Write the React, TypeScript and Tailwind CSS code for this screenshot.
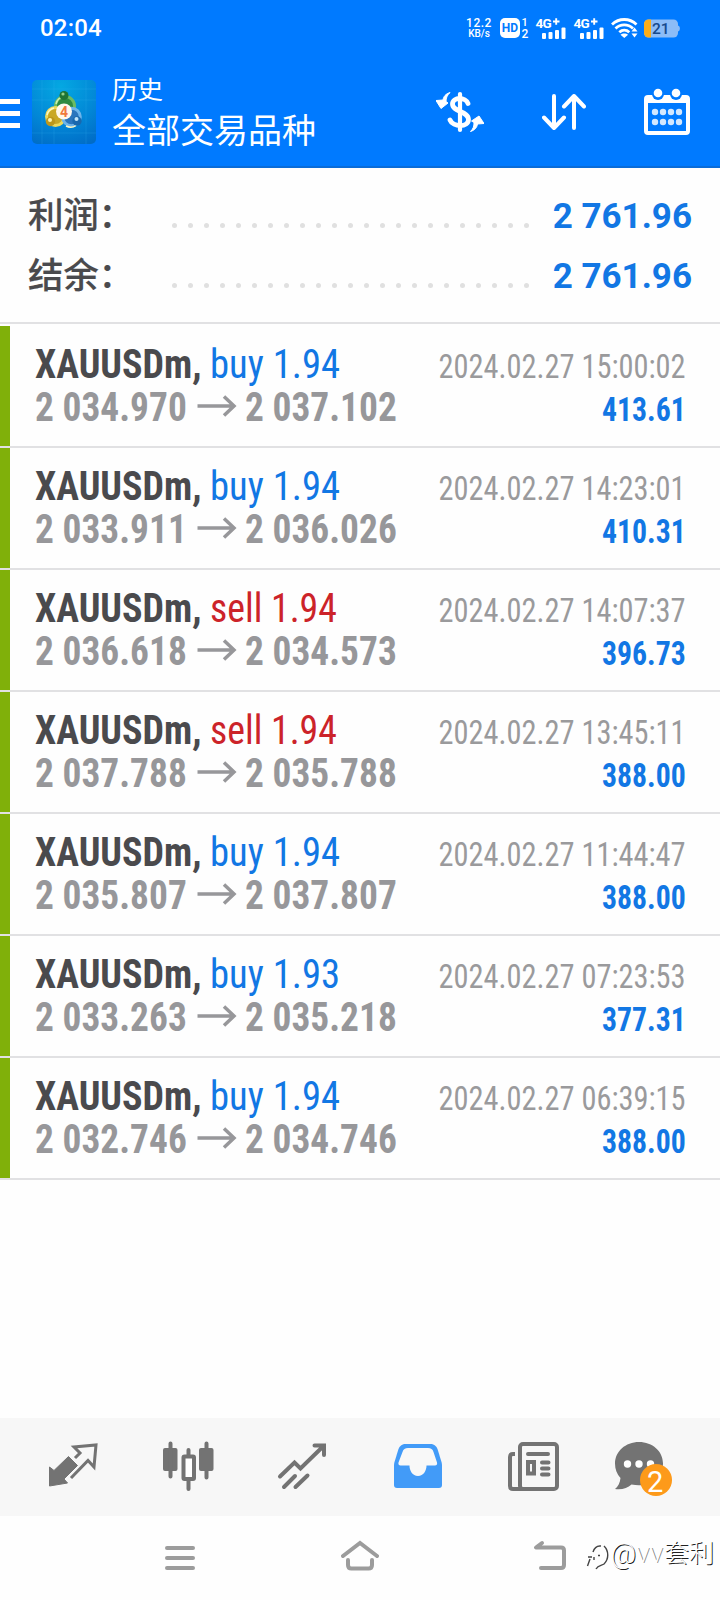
import React from "react";

interface Deal {
    type: "buy" | "sell";
    volume: string;
    open: string;
    close: string;
    time: string;
    profit: string;
}

const deals: Deal[] = [
    { type: "buy", volume: "1.94", open: "2 034.970", close: "2 037.102", time: "2024.02.27 15:00:02", profit: "413.61" },
    { type: "buy", volume: "1.94", open: "2 033.911", close: "2 036.026", time: "2024.02.27 14:23:01", profit: "410.31" },
    { type: "sell", volume: "1.94", open: "2 036.618", close: "2 034.573", time: "2024.02.27 14:07:37", profit: "396.73" },
    { type: "sell", volume: "1.94", open: "2 037.788", close: "2 035.788", time: "2024.02.27 13:45:11", profit: "388.00" },
    { type: "buy", volume: "1.94", open: "2 035.807", close: "2 037.807", time: "2024.02.27 11:44:47", profit: "388.00" },
    { type: "buy", volume: "1.93", open: "2 033.263", close: "2 035.218", time: "2024.02.27 07:23:53", profit: "377.31" },
    { type: "buy", volume: "1.94", open: "2 032.746", close: "2 034.746", time: "2024.02.27 06:39:15", profit: "388.00" },
];

const Signal: React.FC = () => (
    <svg className="overflow-visible" width="30" height="22" viewBox="0 0 30 22" fill="#fff">
        <text x="-0.5" y="10.500" fontSize="13.500" fontWeight="700" letterSpacing="-0.8">4G</text>
        <path d="M17 4.500h6.500M20.200 1.200v6.600" stroke="#fff" strokeWidth="1.900" />
        <rect x="6" y="16" width="4" height="6" rx="1" />
        <rect x="12.500" y="15" width="4" height="7" rx="1" />
        <rect x="19" y="13" width="4" height="9" rx="1" />
        <rect x="25.500" y="10.500" width="4" height="11.500" rx="1" />
    </svg>
);

const StatusBar: React.FC = () => (
    <div className="flex h-14 items-center pl-10 pr-[39px] text-white">
        <span className="text-2xl font-medium tracking-[0.2px]">02:04</span>
        <div className="ml-auto flex items-center">
            <div className="flex w-[26px] flex-col items-center font-medium leading-none">
                <span className="text-[12px] leading-[12px] tracking-[0.5px]">12.2</span>
                <span className="text-[10px] leading-[10px]">KB/s</span>
            </div>
            <svg className="ml-2 overflow-visible" width="29" height="22" viewBox="0 0 29 22" fill="#fff">
                <rect x="0" y="1" width="20" height="20" rx="5" />
                <text x="1.800" y="15.300" fontSize="12" fontWeight="700" fill="#007aff">HD</text>
                <text x="21.500" y="9" fontSize="11" fontWeight="500">1</text>
                <text x="21.500" y="21" fontSize="12" fontWeight="500">2</text>
            </svg>
            <div className="ml-[7px]"><Signal /></div>
            <div className="ml-2"><Signal /></div>
            <svg className="ml-[7px]" width="27" height="22" viewBox="0 0 27 22" fill="none" stroke="#fff" strokeWidth="2.8">
                <path d="M1 7.500C8 .8 18.500 .8 25.500 7.500" />
                <path d="M4.500 11.500c5-4.800 12.500-4.800 17.500 0" />
                <path d="M8.300 15.300c3-2.800 7-2.800 10 0" />
                <path d="M13.300 21l-3.800-3.300c2-1.700 5.600-1.700 7.600 0z" fill="#fff" stroke="none" />
                <path d="M23.500 10.500l3 4h-6zM23.500 20.500l3-4h-6z" fill="#fff" stroke="none" />
            </svg>
            <svg className="ml-[6px]" width="37" height="20" viewBox="0 0 37 20">
                <rect x="0" y="1.500" width="34" height="18" rx="4.500" fill="#8cbcf7" />
                <path d="M34 7.500c2.500.5 2.500 5.500 0 6z" fill="#8cbcf7" />
                <path d="M4.500 1.500H7v18H4.500A4.500 4.500 0 0 1 0 15V6a4.500 4.500 0 0 1 4.500-4.500z" fill="#fbad18" />
                <text x="8" y="16" fontSize="15.500" fontWeight="500" fill="#174a8e">21</text>
            </svg>
        </div>
    </div>
);

const AppLogo: React.FC = () => (
    <svg className="ml-3" width="64" height="64" viewBox="0 0 64 64">
        <defs>
            <radialGradient id="logoBg" cx="0.45" cy="0.1" r="1">
                <stop offset="0" stopColor="#04a8e2" />
                <stop offset="0.6" stopColor="#0286d6" />
                <stop offset="1" stopColor="#006cc6" />
            </radialGradient>
        </defs>
        <rect width="64" height="64" rx="5" fill="url(#logoBg)" />
        <path d="M10 0v64M22 0v64M54 0v64M0 9h64M0 20h64M0 53h64" stroke="#3fb4ee" strokeOpacity="0.2" />
        <circle cx="33" cy="26" r="9.500" fill="#2f8a41" stroke="#6cbc62" strokeWidth="3" />
        <circle cx="23.500" cy="36.500" r="9" fill="#c9a825" stroke="#ecd95c" strokeWidth="3" />
        <circle cx="39.500" cy="37" r="8.800" fill="#2a75bd" stroke="#6db4ea" strokeWidth="3" />
        <path d="M24 24c1-4 4-7 8-7" fill="none" stroke="#c9efae" strokeWidth="1.500" />
        <path d="M15 35c1-4 3-6 7-7M34 46c3 1.500 7 1.500 10-.5" fill="none" stroke="#fdf7c4" strokeWidth="1.500" />
        <circle cx="32" cy="15.500" r="4.500" fill="#1f7433" />
        <circle cx="31" cy="14" r="1.600" fill="#93d089" />
        <circle cx="18.500" cy="41.500" r="4.700" fill="#bd971b" />
        <circle cx="18" cy="40" r="2" fill="#fff6ae" />
        <circle cx="45" cy="41" r="4.700" fill="#1968ae" />
        <circle cx="44.500" cy="39" r="2" fill="#bfe4fb" />
        <circle cx="32" cy="31.500" r="8" fill="#fff8ec" />
        <text x="28" y="36.500" fontSize="14" fontWeight="700" fill="#ef7a3c">4</text>
    </svg>
);

const Header: React.FC = () => (
    <div className="flex h-28 items-center border-b-2 border-[#0a6cd8] pr-[30px] pt-[2px]">
        <div className="flex w-5 flex-col gap-[7px] pt-[2px]">
            <div className="h-[5px] bg-white" />
            <div className="h-[5px] bg-white" />
            <div className="h-[5px] bg-white" />
        </div>
        <AppLogo />
        <div className="ml-4 flex flex-col pt-[2px] text-white">
            <span className="text-[25.5px] leading-[36px]">历史</span>
            <span className="text-[34px] leading-[46px]">全部交易品种</span>
        </div>
        <div className="ml-auto flex items-center gap-[58px]">
            <svg width="48" height="42" viewBox="0 0 48 42" fill="none" stroke="#fff">
                <path d="M24 3v36" strokeWidth="4.200" strokeLinecap="round" />
                <path d="M32 12.500C30 6 16.500 5.500 16.500 13c0 8 16 7 16 15.500 0 8-15.500 8-18.500.5" strokeWidth="4.800" strokeLinecap="round" />
                <path d="M14 1.500C9.500 3 7.500 5.500 7 9L0 9.500 5 17.500l7-5.500-2-1.500C10 7 11 4.500 14 1.500z" fill="#fff" strokeWidth="1" strokeLinejoin="round" />
                <path d="M34.500 40.500c4.500-1.500 6.500-4 7-7.500l6.500-.5-5-7.500-7.500 5 2.500 1.500c0 3.500-.5 6-3.500 9z" fill="#fff" strokeWidth="1" strokeLinejoin="round" />
            </svg>
            <svg width="44" height="38" viewBox="0 0 44 38" fill="none" stroke="#fff" strokeWidth="4" strokeLinecap="round" strokeLinejoin="round">
                <path d="M12 3v32M2 24.500L12 35l10-10.500" />
                <path d="M32 35V3M22 13.500L32 3l10 10.500" />
            </svg>
            <svg width="46" height="48" viewBox="0 0 46 48">
                <rect x="2" y="9" width="42" height="36" rx="2" fill="none" stroke="#fff" strokeWidth="4" />
                <path d="M2 8h42v7H2z" fill="#fff" />
                <circle cx="14" cy="6" r="6" fill="#007aff" />
                <circle cx="32" cy="6" r="6" fill="#007aff" />
                <circle cx="14" cy="5" r="4.300" fill="#fff" />
                <circle cx="32" cy="5" r="4.300" fill="#fff" />
                <g fill="#d3e8ff">
                    {[11, 19, 27, 35].map((x) => (
                        <React.Fragment key={x}>
                            <circle cx={x} cy="24" r="3.200" />
                            <circle cx={x} cy="34" r="3.200" />
                        </React.Fragment>
                    ))}
                </g>
            </svg>
        </div>
    </div>
);

const SummaryRow: React.FC<{ label: string; value: string }> = ({ label, value }) => (
    <div className="flex h-[60px] items-center pl-7 pr-7">
        <span className="w-36 pb-[2px] text-[35.5px] font-medium leading-[58px] tracking-[-0.3px] text-[#4a4a4d] [-webkit-text-stroke:0.2px_#4a4a4d]">
            {label}
        </span>
        <div className="flex gap-[11px] pt-[17px]">
            {Array.from({ length: 23 }, (_, i) => (
                <div key={i} className="h-[5px] w-[5px] rounded-full bg-[#e0e0e0]" />
            ))}
        </div>
        <span className="ml-auto text-[35px] font-bold leading-[60px] text-[#1277e4]">{value}</span>
    </div>
);

const DealRow: React.FC<{ deal: Deal }> = ({ deal }) => (
    <div className="flex h-[122px] whitespace-nowrap border-b-2 border-[#e1e1e3] font-['Roboto_Condensed',Roboto,sans-serif]">
        <div className="w-[10px] bg-[#80b00a]" />
        <div className="flex flex-1 justify-between pl-[25px] pr-[34px] pt-[17px]">
            <div className="w-[370px] text-[40px] leading-[43px]">
                <div className="flex">
                    <span className="w-[175px] origin-left scale-x-[0.95] font-bold text-[#4a4a4d]">XAUUSDm,</span>
                    <span className={deal.type === "buy" ? "origin-left scale-x-[0.965] text-[#1277e4]" : "origin-left scale-x-[0.945] text-[#cc2329]"}>
                        {deal.type} {deal.volume}
                    </span>
                </div>
                <div className="flex items-center font-bold text-[#97979a]">
                    <span className="w-[161px] shrink-0 origin-left scale-x-[0.935]">{deal.open}</span>
                    <svg className="mb-[4px] mr-[7px] shrink-0" width="42" height="22" viewBox="0 0 42 22" fill="none" stroke="#97979a" strokeWidth="3.500">
                        <path d="M1.500 11h36.500M28 1.500L38 11 28 20.500" />
                    </svg>
                    <span className="shrink-0 origin-left scale-x-[0.935]">{deal.close}</span>
                </div>
            </div>
            <div className="flex w-[260px] flex-col items-end pt-[2px] text-[34px] leading-[43px]">
                <span className="origin-right scale-x-[0.893] text-[#9a9a9c]">{deal.time}</span>
                <span className="origin-right scale-x-[0.875] font-bold text-[#1277e4]">{deal.profit}</span>
            </div>
        </div>
    </div>
);

const TabBar: React.FC = () => (
    <div className="grid h-[98px] grid-cols-6 place-items-center bg-[#f7f7f7] px-4 pb-[2px]">
        <svg width="50" height="50" viewBox="0 0 50 50">
            <path d="M20.500 15.500l9 9-13.500 13.500 3.500 4L1.500 45V26l4.500 3.500z" fill="#737373" stroke="#737373" strokeLinejoin="round" />
            <path d="M27 17l5-5-6-6L48 4 46 26l-6-6.500L23 37" fill="none" stroke="#737373" strokeWidth="3" />
        </svg>
        <svg width="52" height="50" viewBox="0 0 52 50" fill="#737373">
            <rect x="1" y="7" width="14.500" height="23" rx="2" />
            <path d="M8.500 2.500v33M44.500 2.500v34M26.500 9v8M26.500 38v10" stroke="#737373" strokeWidth="4" strokeLinecap="round" />
            <rect x="37" y="7" width="14.500" height="23" rx="2" />
            <rect x="21.500" y="15.500" width="10.500" height="22.500" rx="1" fill="#fff" stroke="#737373" strokeWidth="4" />
        </svg>
        <svg className="mr-[2px]" width="50" height="50" viewBox="0 0 50 50" fill="none" stroke="#737373" strokeWidth="4" strokeLinecap="round">
            <path d="M3 35.500L17.500 21.500l6 6L46 5.500M37.500 4.500H47V14" />
            <path d="M7 46l11-11M18.500 46l12-11.500" />
        </svg>
        <svg className="ml-[2px]" width="48" height="46" viewBox="0 0 48 46">
            <path d="M12 1h24c4 0 6 1.500 7.500 5l4 13c.5 2 .5 3 .5 4v19c0 2-1 3-3 3H3c-2 0-3-1-3-3V23c0-1 0-2 .5-4l4-13C6 2.500 8 1 12 1z" fill="#429bf8" />
            <path d="M14 5h20c3 0 4.500 1 5.500 4l3.500 10.500c.5 2-.5 3-2 3H32.500c0 5-3 10.500-8.500 10.500s-8.500-5.500-8.500-10.500H6.500c-1.500 0-2.500-1-2-3L8.500 9c1-3 2.500-4 5.500-4z" fill="#f8f8f8" />
        </svg>
        <svg className="ml-[2px]" width="52" height="50" viewBox="0 0 52 50" fill="none" stroke="#737373" strokeWidth="4">
            <rect x="13" y="3" width="37" height="45" rx="3" />
            <path d="M8 13H6c-2 0-3 1-3 3v29c0 2 1 3 3 3h12" />
            <rect x="21" y="21" width="6" height="11.500" />
            <path d="M21 13h20M35 21.500h6.500M35 27.500h6.500M35 33.500h6.500" strokeLinecap="round" />
        </svg>
        <div className="relative mr-[15px]">
            <svg width="50" height="50" viewBox="0 0 50 50" fill="#737373">
                <path d="M25 1C11.500 1 1 10.500 1 22.500c0 6 2 10.500 5.500 14.500C6 42 4 45.500 1 48c7 1 12.500-1 16.500-4.500 2.500.5 5 .8 7.500.8 13.500 0 24-9.500 24-21.800S38.500 1 25 1z" />
                <g fill="#fff">
                    <circle cx="13.500" cy="23" r="3.700" />
                    <circle cx="25" cy="23" r="3.700" />
                    <circle cx="36.500" cy="23" r="3.700" />
                </g>
            </svg>
            <span className="absolute left-[26px] top-[23px] flex h-8 w-8 items-center justify-center rounded-full bg-[#fd9a1a] pr-[2px] pt-[5px] text-[29px] leading-none text-white">
                2
            </span>
        </div>
    </div>
);

const SystemNav: React.FC = () => (
    <div className="relative flex h-[84px] bg-[#fefefe] pl-[165px] pt-[24px]">
        <div className="flex w-[30px] flex-col gap-[6px] pt-[6px]">
            <div className="h-1 rounded-full bg-[#9c9c9c]" />
            <div className="h-1 rounded-full bg-[#9c9c9c]" />
            <div className="h-1 rounded-full bg-[#9c9c9c]" />
        </div>
        <svg className="ml-[146px]" width="38" height="32" viewBox="0 0 38 32" fill="none" stroke="#9c9c9c" strokeWidth="4" strokeLinecap="round">
            <path d="M2 16L19 3l17 13M7 20v5c0 2.500 1 3.500 3.500 3.500h17c2.500 0 3.500-1 3.500-3.500v-5" />
        </svg>
        <svg className="ml-[154px]" width="34" height="32" viewBox="0 0 34 32" fill="none" stroke="#9c9c9c" strokeWidth="4" strokeLinecap="round" strokeLinejoin="round">
            <path d="M9 3L3 7.500h25c2 0 3 1 3 3V25c0 2-1 3-3 3H8" />
        </svg>
        <div className="absolute right-[6px] top-[20px] flex items-center font-light leading-[36px] text-white [text-shadow:1px_1px_0.5px_#222]">
            <svg className="mt-[3px]" width="24" height="30" viewBox="0 0 24 30" fill="none" stroke="#444" strokeWidth="1.400">
                <path d="M1.500 25l2.500-7M2 16h4M7 11c1.500-5 4-6.500 8-6M12 14.500h2M8 19v-3M18 5c5 5 5 13 0 18-2 1.500-6 1-8 5" />
            </svg>
            <span className="text-[28px]">@</span>
            <span className="mr-[1px] text-[28px] [text-shadow:1px_0_0.5px_#888]">vv</span>
            <span className="text-[25px]">套利</span>
        </div>
    </div>
);

const App: React.FC = () => {
    return (
        <div className="flex h-[1600px] w-[720px] flex-col overflow-hidden bg-[#fefefe] font-[Roboto,'Noto_Sans_CJK_SC',sans-serif]">
            <div className="bg-[#007aff]">
                <StatusBar />
                <Header />
            </div>
            <div className="h-[156px] border-b-2 border-[#e1e1e3] pt-[19px]">
                <SummaryRow label="利润：" value="2 761.96" />
                <SummaryRow label="结余：" value="2 761.96" />
            </div>
            <div className="pt-[2px]">
                {deals.map((deal) => (
                    <DealRow key={deal.time} deal={deal} />
                ))}
            </div>
            <div className="flex-1" />
            <TabBar />
            <SystemNav />
        </div>
    );
};

export default App;
